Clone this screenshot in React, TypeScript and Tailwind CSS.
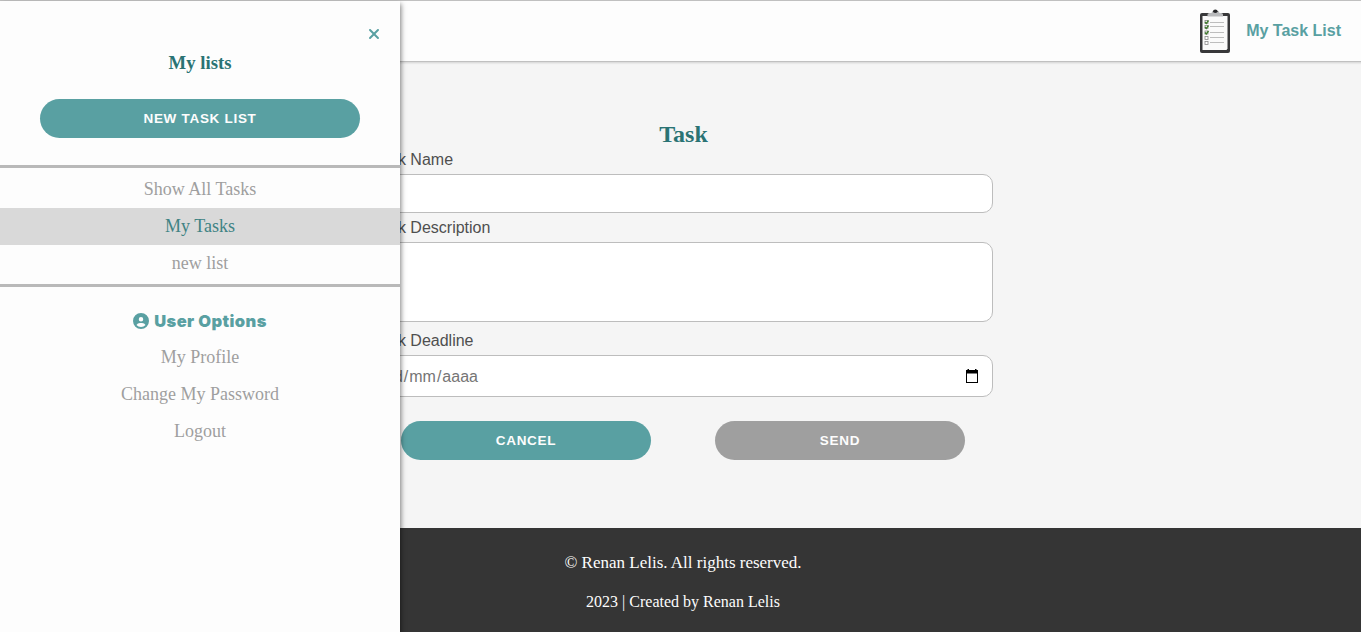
import { FaCircleUser, FaXmark } from "react-icons/fa6";

function ClipboardLogo() {
  return (
    <svg className="mt-px" width="32" height="46" viewBox="0 0 32 46" aria-hidden="true">
      <rect x="1" y="4" width="30" height="40" rx="2" fill="#38383a" />
      <path d="M3.500 7H28.500V39.5L27.500 41H3.500Z" fill="#fafafa" />
      <path d="M8.500 7.500V5.500Q8.500 4 10.500 4H12.500L13.500 2H19.500L20.500 4H22Q24 4 24 5.500V7.500Z" fill="#b9babc" />
      <ellipse cx="16.300" cy="2.300" rx="2.300" ry="1.800" fill="#252527" />
      <path d="M11 13.500H25M11 17.500H25M11 23.500H25M11 28.500H25M11 33.500H25" stroke="#b5b5b5" strokeWidth="0.900" />
      <g fill="#fff" stroke="#888" strokeWidth="0.800">
        <rect x="6" y="11.500" width="3" height="3" />
        <rect x="6" y="16.500" width="3" height="3" />
        <rect x="6" y="22" width="3" height="3" />
        <rect x="6" y="27.500" width="3" height="3" />
        <rect x="6" y="32.500" width="3" height="3" />
      </g>
      <path d="M6 13L7.300 14.500L9.500 11.500M6 18L7.300 19.500L9.500 16.500M6 23.500L7.300 25L9.500 22" fill="none" stroke="#3f7a2c" strokeWidth="1.300" />
    </svg>
  );
}

function CalendarIcon() {
  return (
    <svg width="14" height="15" viewBox="0 0 14 15" aria-hidden="true">
      <path d="M1 1H2.500V0H4V1H10V0H11.500V1H13V14H1ZM2 4.500V13H12V4.500Z" fill="#000" fillRule="evenodd" />
    </svg>
  );
}

const pill =
  "flex h-[39px] items-center justify-center rounded-full pt-px font-['Liberation_Sans',sans-serif] text-[13.5px] leading-4 font-bold tracking-[0.7px] text-[#fdfdfd]";
const label = "block text-base leading-[18px] text-[#4f4f4f]";
const field = "rounded-[10px] border border-[#bdbdbd] bg-white";

function MenuItem({ text, active = false }: { text: string; active?: boolean }) {
  return (
    <li
      className={
        active
          ? "flex h-[37px] items-center justify-center bg-[#d9d9d9] text-[#3f8384]"
          : "flex h-[37px] items-center justify-center text-[#9f9f9f]"
      }
    >
      {text}
    </li>
  );
}

function Sidebar() {
  return (
    <aside className="absolute top-px bottom-0 left-0 w-[400px] bg-[#fdfdfd] font-['Liberation_Serif',serif] text-[18px] shadow-[1px_3px_5px_rgba(0,0,0,0.5)]">
      <div className="flex h-[49px] items-end justify-end pr-[18px] pb-2">
        <FaXmark className="size-4 text-[#59a0a2]" />
      </div>
      <h2 className="text-center text-[18.700px] leading-[26px] font-bold text-[#2a7374]">My lists</h2>
      <button className={`${pill} mx-10 mt-[23px] w-80 bg-[#59a0a2]`}>NEW TASK LIST</button>
      <hr className="mt-[27px] h-[3px] border-0 bg-[#b9b9b9]" />
      <ul className="mt-[3px]">
        <MenuItem text="Show All Tasks" />
        <MenuItem text="My Tasks" active />
        <MenuItem text="new list" />
      </ul>
      <hr className="mt-[2px] h-[3px] border-0 bg-[#b9b9b9]" />
      <h3 className="mt-[21px] flex h-[26px] items-center justify-center gap-[5px] font-[Inter,sans-serif] text-[16.5px] font-black tracking-[0.4px] text-[#59a0a2]">
        <FaCircleUser className="size-4" />
        User Options
      </h3>
      <ul className="mt-[5px]">
        <MenuItem text="My Profile" />
        <MenuItem text="Change My Password" />
        <MenuItem text="Logout" />
      </ul>
    </aside>
  );
}

export default function App() {
  return (
    <div className="relative h-[632px] w-full overflow-hidden bg-[#f5f5f5] font-['Liberation_Sans',sans-serif]">
      <div className="flex h-full w-[1366px] flex-col">
        <header className="flex h-[62px] shrink-0 items-center justify-end gap-[15px] border-t border-b border-[#c0c0c0] bg-[#fdfdfd] pr-[25px] shadow-[0_1px_2px_rgba(0,0,0,0.15)]">
          <ClipboardLogo />
          <span className="text-base font-bold text-[#59a0a2]">My Task List</span>
        </header>
        <main className="flex flex-1 flex-col items-center pt-[57px]">
          <h1 className="pl-px font-['Liberation_Serif',serif] text-2xl leading-[30px] font-bold text-[#2a7374]">Task</h1>
          <form className="flex w-[620px] flex-col pt-0.5">
            <label className={label}>Task Name</label>
            <div className={`${field} mt-[5px] h-[39px]`} />
            <label className={`${label} mt-1.5`}>Task Description</label>
            <div className={`${field} mt-[5px] h-20`} />
            <label className={`${label} mt-[10px]`}>Task Deadline</label>
            <div className={`${field} mt-[5px] flex h-[42px] items-center justify-between pr-[13px] pl-[10px] text-base text-[#757575]`}>
              <span className="flex pt-0.5">
                <span className="px-px">dd</span>/<span className="px-px">mm</span>/<span className="px-px">aaaa</span>
              </span>
              <CalendarIcon />
            </div>
            <div className="mt-6 flex justify-center gap-16">
              <button type="button" className={`${pill} w-[250px] bg-[#59a0a2]`}>CANCEL</button>
              <button type="button" className={`${pill} w-[250px] bg-[#9f9f9f]`}>SEND</button>
            </div>
          </form>
        </main>
        <footer className="flex h-[104px] shrink-0 flex-col items-center bg-[#353535] pt-[25px] font-['Liberation_Serif',serif] text-[#fdfdfd]">
          <p className="text-[17px] leading-5">© Renan Lelis. All rights reserved.</p>
          <p className="mt-[19px] text-base leading-5">2023 | Created by Renan Lelis</p>
        </footer>
      </div>
      <Sidebar />
    </div>
  );
}
